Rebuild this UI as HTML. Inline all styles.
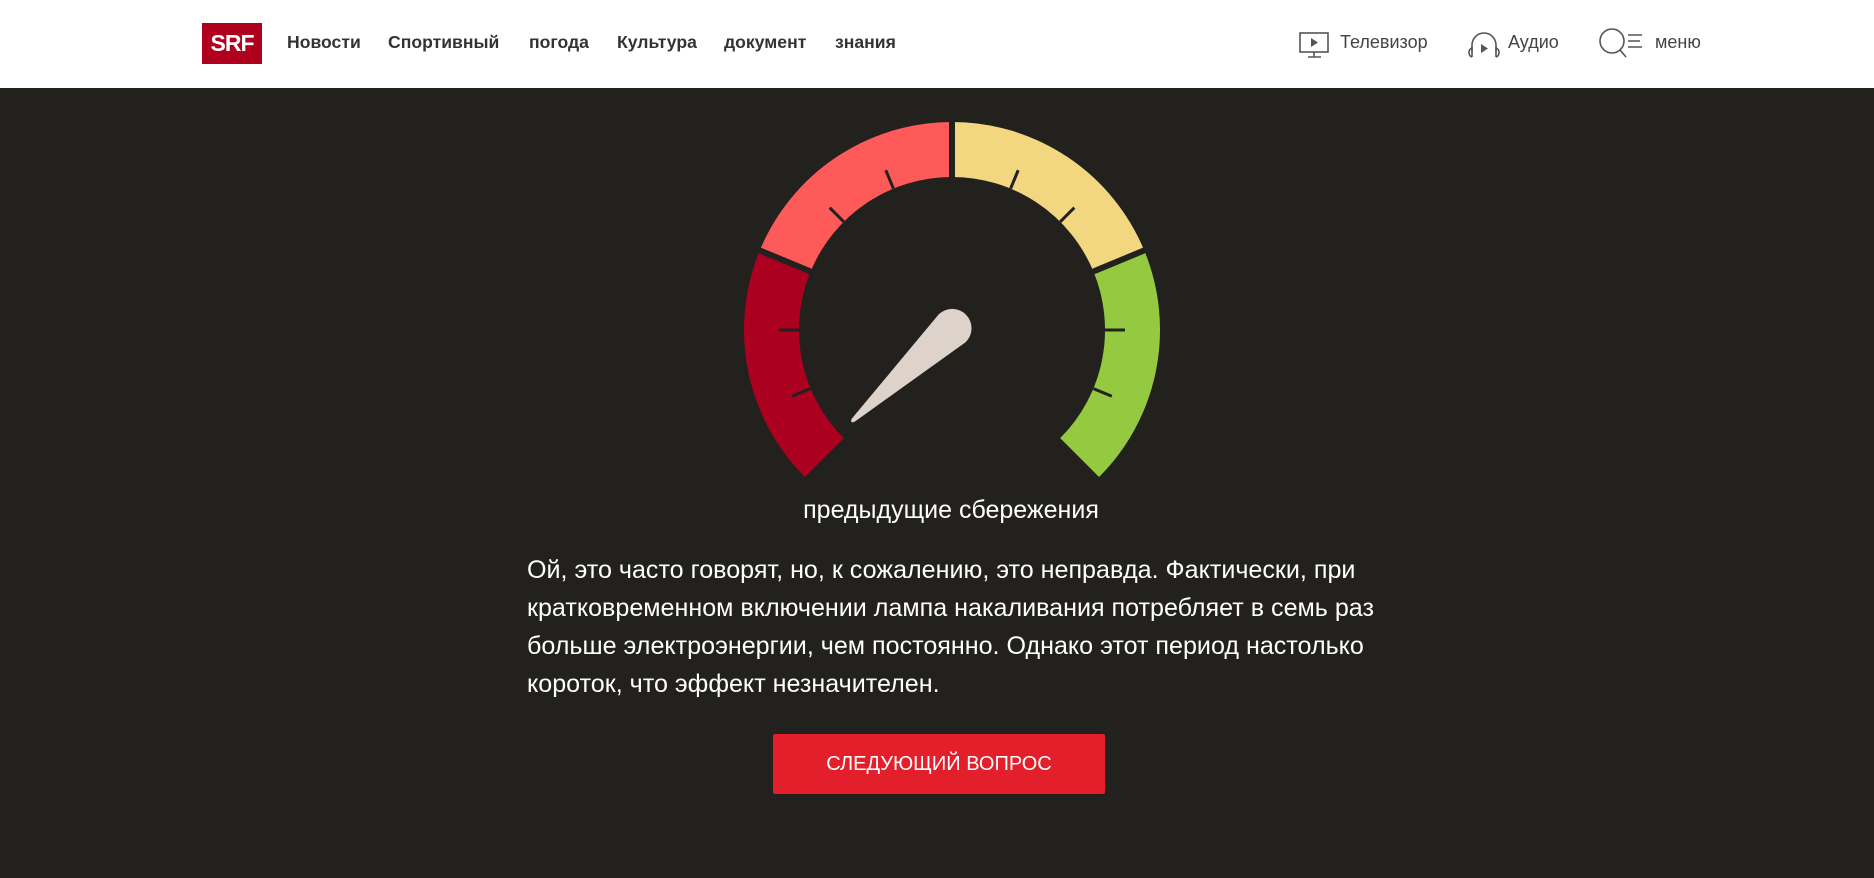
<!DOCTYPE html>
<html><head><meta charset="utf-8"><style>
html,body{margin:0;padding:0;width:1874px;height:878px;overflow:hidden;background:#22211e;font-family:"Liberation Sans",sans-serif}
.hdr{position:absolute;left:0;top:0;width:1874px;height:88px;background:#fff}
.logo{position:absolute;left:202px;top:23px;width:60px;height:41px;background:#af001e;color:#fff;font-weight:bold;font-size:23px;line-height:41px;text-align:center;letter-spacing:-1px}
.nav{position:absolute;top:32px;font-size:17.6px;font-weight:bold;color:#333}
.rn{position:absolute;top:32px;font-size:18px;color:#444}
.lab{position:absolute;left:0;width:1902px;top:496px;text-align:center;color:#fff;font-size:25px}
.p{position:absolute;left:527px;top:551px;width:870px;color:#fff;font-size:25.1px;line-height:38px}
.btn{position:absolute;left:773px;top:734px;width:332px;height:60px;background:#e31f2b;border-radius:2px;color:#fff;font-size:20px;line-height:60px;text-align:center}
</style></head><body>
<div class="hdr">
<div class="logo">SRF</div>
<span class="nav" style="left:287px">Новости</span>
<span class="nav" style="left:388px">Спортивный</span>
<span class="nav" style="left:529px">погода</span>
<span class="nav" style="left:617px">Культура</span>
<span class="nav" style="left:724px">документ</span>
<span class="nav" style="left:835px">знания</span>
<svg style="position:absolute;left:1298px;top:30px" width="34" height="30" viewBox="0 0 34 30" fill="none" stroke="#555" stroke-width="1.6"><rect x="2" y="3" width="28" height="19"/><path d="M16 22v5M10 27h13"/><path d="M13 8l7 4.5-7 4.5z" fill="#555" stroke="none"/></svg>
<span class="rn" style="left:1340px">Телевизор</span>
<svg style="position:absolute;left:1467px;top:29px" width="34" height="32" viewBox="0 0 34 32" fill="none" stroke="#555" stroke-width="1.6"><path d="M5 22v-6a12 12 0 0 1 24 0v6"/><path d="M5 19c-4 1-4 8 0 9M29 19c4 1 4 8 0 9"/><path d="M5 18v10M29 18v10"/><path d="M14 15l7 4.5-7 4.5z" fill="#555" stroke="none"/></svg>
<span class="rn" style="left:1508px">Аудио</span>
<svg style="position:absolute;left:1598px;top:27px" width="52" height="34" viewBox="0 0 52 34" fill="none" stroke="#555" stroke-width="1.6"><circle cx="14" cy="14" r="12"/><path d="M22 23l6 7M30 8h14M30 14h12M30 20h14"/></svg>
<span class="rn" style="left:1655px">меню</span>
</div>
<svg style="position:absolute;left:0;top:0" width="1874" height="878">
<g fill="none" stroke-width="55">
<path d="M824.4,457.6 A180.5,180.5 0 0 1 785.2,260.9" stroke="#ab0020"/>
<path d="M785.2,260.9 A180.5,180.5 0 0 1 952,149.5" stroke="#ff5a5a"/>
<path d="M952,149.5 A180.5,180.5 0 0 1 1118.8,260.9" stroke="#f2d680"/>
<path d="M1118.8,260.9 A180.5,180.5 0 0 1 1079.6,457.6" stroke="#95c940"/>
</g>
<g stroke="#22211e" stroke-width="6">
<path d="M813.4,272.6L756.1,248.9M952,180V116M1090.6,272.6L1147.9,248.9"/>
</g>
<g stroke="#22211e" stroke-width="3">
<path d="M810.6,388.6L792.2,396.2M799,330H779M843.8,221.8L829.7,207.7M893.4,188.6L885.8,170.2M1010.6,188.6L1018.2,170.2M1060.2,221.8L1074.3,207.7M1105,330H1125M1093.4,388.6L1111.8,396.2"/>
</g>
<path d="M938.8,314.3 A19,19 0 1 1 965.6,342.2 L855,421.5 Q850,424 851.5,419 Z" fill="#ddd3ca"/>
</svg>
<div class="lab">предыдущие сбережения</div>
<div class="p">Ой, это часто говорят, но, к сожалению, это неправда. Фактически, при кратковременном включении лампа накаливания потребляет в семь раз больше электроэнергии, чем постоянно. Однако этот период настолько короток, что эффект незначителен.</div>
<div class="btn">СЛЕДУЮЩИЙ ВОПРОС</div>
</body></html>
